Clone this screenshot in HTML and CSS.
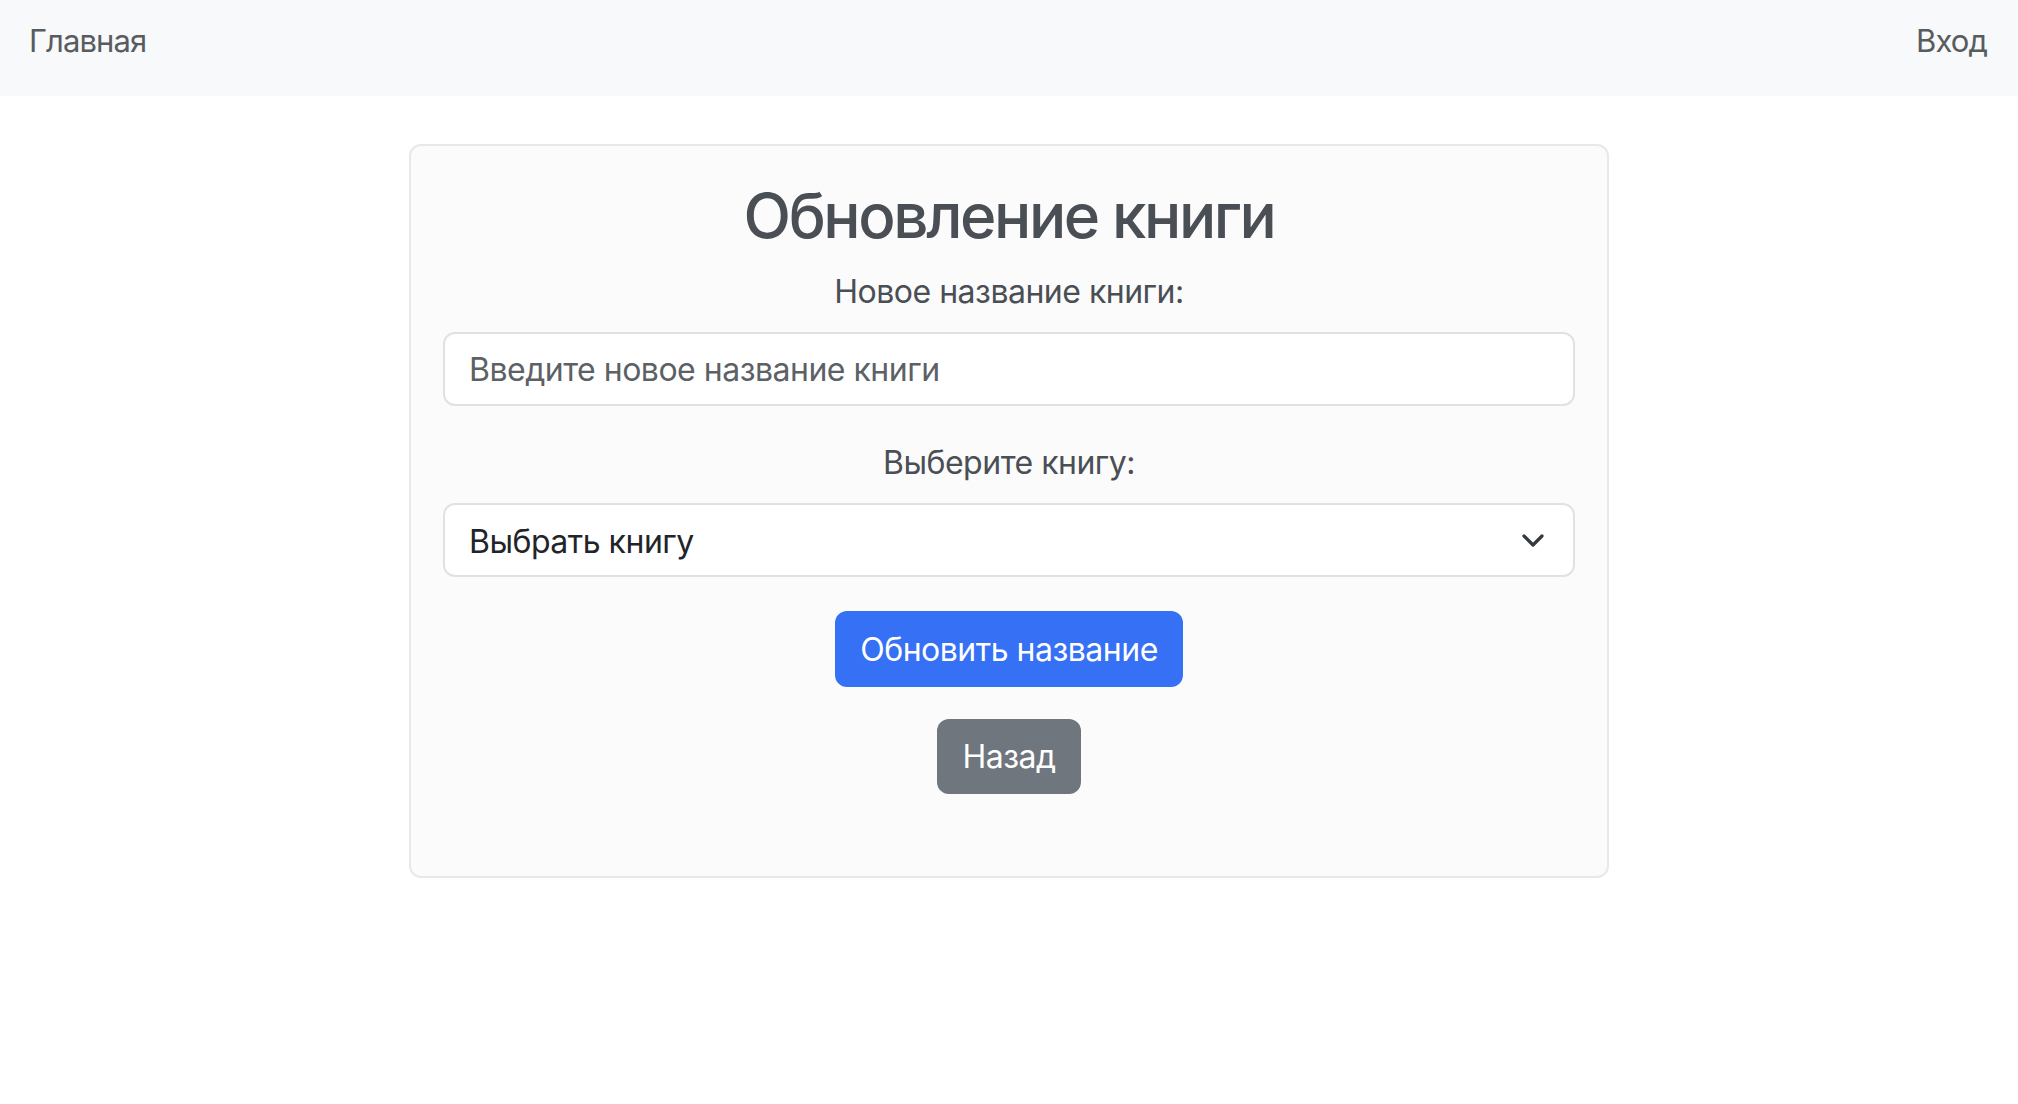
FILE: index.html
```html
<!DOCTYPE html>
<html lang="ru">
<head>
<meta charset="utf-8">
<title>Обновление книги</title>
<link rel="stylesheet" href="styles.css">
</head>
<body>
<nav class="navbar">
  <a class="nav-link" href="#">Главная</a>
  <a class="nav-link" href="#">Вход</a>
</nav>
<main class="page">
  <section class="card">
    <h2 class="title">Обновление книги</h2>
    <form class="form">
      <div class="field">
        <label class="label" for="newTitle">Новое название книги:</label>
        <input class="control" id="newTitle" type="text" placeholder="Введите новое название книги">
      </div>
      <div class="field field-select">
        <label class="label" for="book">Выберите книгу:</label>
        <div class="select">
          <span class="select-text">Выбрать книгу</span>
          <svg class="chevron" width="22" height="14" viewBox="0 0 22 14" aria-hidden="true">
            <path d="M2 2 L11 11 L20 2" fill="none" stroke="#343a40" stroke-width="3.2" stroke-linecap="round" stroke-linejoin="round"/>
          </svg>
        </div>
      </div>
      <div class="actions">
        <button type="button" class="btn btn-primary">Обновить название</button>
        <button type="button" class="btn btn-secondary">Назад</button>
      </div>
    </form>
  </section>
</main>
</body>
</html>
```

FILE: styles.css
```css
* { box-sizing: border-box; }
html, body { margin: 0; padding: 0; }
body {
  font-family: Inter, "Noto Sans", "Liberation Sans", sans-serif;
  background: #ffffff;
  color: #212529;
  font-size: 32px;
  letter-spacing: -0.5px;
}
.navbar {
  height: 96px;
  background: #f8f9fa;
  display: flex;
  justify-content: space-between;
  align-items: center;
  padding: 0 31px 14px 29px;
}
.nav-link {
  color: #595c5f;
  text-decoration: none;
  font-size: 31px;
  line-height: 48px;
  letter-spacing: -0.9px;
}
.page {
  display: flex;
  justify-content: center;
  padding-top: 48px;
}
.card {
  width: 1200px;
  background: #fbfbfb;
  border: 2px solid #e8e8ec;
  border-radius: 12px;
  padding: 31px 32px 33px 32px;
}
.title {
  margin: 0 0 14px 0;
  text-align: center;
  font-size: 62px;
  line-height: 77px;
  font-weight: 500;
  letter-spacing: -2.4px;
  color: #4a4f55;
}
.form { display: flex; flex-direction: column; }
.field { display: flex; flex-direction: column; margin-bottom: 33px; }
.field-select { margin-bottom: 34px; }
.label {
  text-align: center;
  font-size: 32px;
  line-height: 48px;
  color: #4a4f55;
  margin-bottom: 16px;
}
.control {
  height: 74px;
  border: 2px solid #dee2e6;
  border-radius: 12px;
  background: #fff;
  padding: 0 24px;
  font-family: inherit;
  font-size: 32px;
  letter-spacing: -0.5px;
  color: #212529;
  outline: none;
}
.control::placeholder { color: #5c6166; opacity: 1; }
.select {
  height: 74px;
  border: 2px solid #dee2e6;
  border-radius: 12px;
  background: #fff;
  padding: 0 29px 0 24px;
  display: flex;
  align-items: center;
  justify-content: space-between;
}
.select-text { font-size: 32px; color: #212529; padding-top: 3px; }
.chevron { display: block; margin-top: 2px; }
.actions {
  display: flex;
  flex-direction: column;
  align-items: center;
  gap: 32px;
  padding-bottom: 49px;
}
.btn {
  height: 76px;
  border: none;
  border-radius: 12px;
  padding: 0 25px;
  font-family: inherit;
  font-size: 32px;
  letter-spacing: -0.5px;
  color: #fff;
  cursor: pointer;
}
.btn-primary { background: #3570f5; }
.btn-secondary { background: #6f767d; height: 75px; }
```
